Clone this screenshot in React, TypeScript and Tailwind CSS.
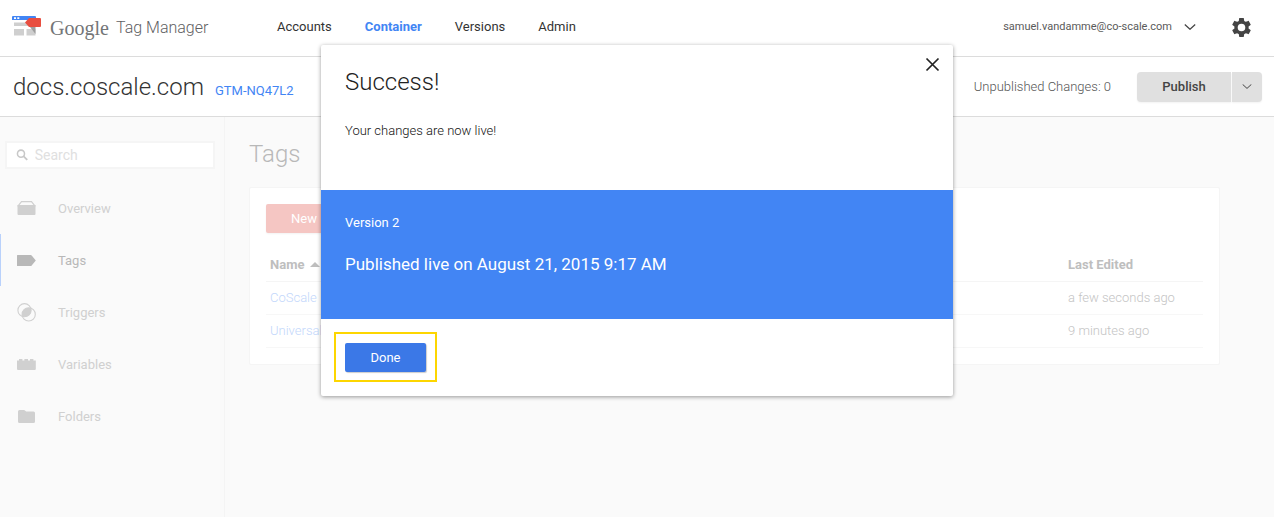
import type { ReactNode } from "react";

const NAV = [
  { label: "Accounts", active: false },
  { label: "Container", active: true },
  { label: "Versions", active: false },
  { label: "Admin", active: false },
];

const ROWS = [
  { name: "CoScale", edited: "a few seconds ago" },
  { name: "Universal Analytics", edited: "9 minutes ago" },
];

const SIDE: { label: string; active?: boolean; icon: ReactNode }[] = [
  {
    label: "Overview",
    icon: (
      <>
        <path d="M4.500 2.600h10l3.200 4H1.300z" fill="#fafafa" stroke="currentColor" strokeWidth="1.200" />
        <path d="M0.500 6h18V15q0 1-1 1h-16q-1 0-1-1z" />
      </>
    ),
  },
  { label: "Tags", active: true, icon: <path d="M0 4.500q0-.500.500-.500h13.200q.600 0 1 .500L18.800 9.500l-4.100 5q-.400.500-1 .500H.500q-.500 0-.500-.500z" /> },
  {
    label: "Triggers",
    icon: (
      <>
        <circle cx="7.500" cy="7.200" r="6.600" fill="none" stroke="currentColor" strokeWidth="1.100" />
        <circle cx="11.700" cy="11.400" r="6.600" fill="none" stroke="currentColor" strokeWidth="1.100" />
        <path d="M13.770 5.130A6.600 6.600 0 0 0 5.430 13.470A6.600 6.600 0 0 0 13.770 5.130z" />
      </>
    ),
  },
  { label: "Variables", icon: <path d="M0 5.500h2V4h3.400v1.500h2V4h3.600v1.500h2V4h3.400v1.500h2.400V14q0 1-1 1H1q-1 0-1-1z" /> },
  { label: "Folders", icon: <path d="M1 4.500q0-1.500 1.500-1.500h4.700l2 1.500H16.500q1.500 0 1.500 1.500V14.500q0 1.500-1.500 1.500H2.500q-1.500 0-1.500-1.500z" /> },
];

function Logo() {
  return (
    <svg width="30" height="20" viewBox="0 0 30 20" aria-hidden="true">
      <path d="M2 6.500h22V10H2zM2 13h10v6.500H2zM14.500 13H23.500v6.500h-9z" fill="#cfcfcf" />
      <path d="M18 11h5.500v7z" fill="#9e9e9e" />
      <path d="M0 1q0-1 1-1h22q1 0 1 1v3H0z" fill="#4285f4" />
      <path d="M2 1.300h2v1.700H2zM5.300 1.300h2v1.700h-2z" fill="#fff" />
      <path d="M17 2h11q1 0 1 1v7q0 1-1 1H17l-4-4.500z" fill="#e84e40" />
    </svg>
  );
}

function Chevron({ size }: { size: "sm" | "lg" }) {
  return (
    <svg className={size === "lg" ? "h-[6px] w-[12px]" : "h-[5px] w-[10px]"} viewBox="0 0 12 6" fill="none" stroke="#444" strokeWidth="1.200" aria-hidden="true">
      <path d="M.8.500l5.200 4.800 5.200-4.800" />
    </svg>
  );
}

function Header() {
  return (
    <header className="flex h-[57px] items-center border-b border-[#dcdcdc] bg-white pr-[23px] pb-px pl-3">
      <a href="#home" className="flex w-[265px] items-start">
        <Logo />
        <span className="ml-2 w-[58px] font-['Liberation_Serif',serif] text-xl leading-6 text-[#737577]">Google</span>
        <span className="ml-2 text-base leading-6 font-light text-[#5f6163]">Tag Manager</span>
      </a>
      <nav className="flex gap-[33px] pb-[2px] text-[13px] leading-5">
        {NAV.map((n) => (
          <a key={n.label} href={"#" + n.label} className={n.active ? "font-bold text-[#4285f4]" : "text-[#333]"}>
            {n.label}
          </a>
        ))}
      </nav>
      <button className="ml-auto flex items-center gap-3 pb-px text-[11px] leading-5 text-[#5a5a5a]">
        samuel.vandamme@co-scale.com
        <Chevron size="lg" />
      </button>
      <button aria-label="Settings" className="ml-9">
        <svg width="19" height="19" viewBox="2 2 20 20" fill="#444" aria-hidden="true">
          <path d="M19.430 12.980c.040-.320.070-.640.070-.980s-.030-.660-.070-.980l2.110-1.650c.190-.150.240-.420.120-.640l-2-3.460c-.120-.220-.390-.300-.610-.220l-2.490 1c-.520-.400-1.080-.730-1.690-.980l-.380-2.650C14.460 2.180 14.250 2 14 2h-4c-.250 0-.460.180-.490.420l-.380 2.650c-.610.250-1.170.590-1.690.980l-2.490-1c-.230-.090-.490 0-.610.220l-2 3.460c-.130.220-.070.490.120.640l2.110 1.650c-.040.320-.070.650-.070.980s.030.660.070.980l-2.110 1.650c-.190.150-.240.420-.120.640l2 3.460c.120.220.390.300.610.220l2.490-1c.520.400 1.080.730 1.690.980l.380 2.650c.030.240.240.420.490.420h4c.250 0 .460-.180.490-.420l.380-2.650c.610-.250 1.170-.590 1.690-.980l2.490 1c.230.090.490 0 .610-.220l2-3.460c.120-.220.070-.490-.120-.640zM12 16a4 4 0 1 1 0-8 4 4 0 0 1 0 8z" />
        </svg>
      </button>
    </header>
  );
}

function ContainerBar() {
  return (
    <div className="flex h-[60px] items-center border-b border-[#dcdcdc] bg-white pr-3 pl-[13px]">
      <div className="flex items-baseline gap-[11px]">
        <h1 className="text-2xl font-light text-[#333]">docs.coscale.com</h1>
        <a href="#container" className="text-[13px] text-[#4285f4]">GTM-NQ47L2</a>
      </div>
      <span className="ml-auto text-[13px] leading-5 font-light text-[#555]">Unpublished Changes: 0</span>
      <div className="ml-[26px] flex gap-px">
        <button className="h-[30px] w-[94px] rounded-l-sm bg-[#e0e0e0] text-[13px] font-medium text-[#444] shadow-xs">Publish</button>
        <button aria-label="More publish options" className="flex h-[30px] w-[30px] items-center justify-center rounded-r-sm bg-[#e0e0e0] shadow-xs">
          <Chevron size="sm" />
        </button>
      </div>
    </div>
  );
}

function Sidebar() {
  return (
    <aside className="w-[225px] shrink-0 border-r border-[#f4f4f4] pt-6">
      <label className="mr-[9px] ml-[5px] flex h-7 items-center gap-[6px] border-2 border-[#f5f5f5] bg-white pl-[9px] text-[#c8c8c8]">
        <svg width="14" height="14" viewBox="0 0 14 14" fill="none" stroke="currentColor" aria-hidden="true">
          <circle cx="5.500" cy="5.500" r="3.900" strokeWidth="1.700" />
          <path d="M8.200 8.200l4.200 4.200" strokeWidth="2" />
        </svg>
        <input type="search" aria-label="Search" placeholder="Search" className="w-full min-w-0 bg-transparent text-sm outline-none placeholder:text-[#e0e0e0]" />
      </label>
      <nav className="mt-[13px] flex flex-col text-[13px]">
        {SIDE.map((s) => (
          <a
            key={s.label}
            href={"#" + s.label}
            className={"flex h-[52px] items-center gap-[21px] border-l pt-px pl-4 " + (s.active ? "border-[#b9d1fb] text-[#b8b8b8]" : "border-transparent text-[#d0d0d0]")}
          >
            <svg className="mb-px" width="20" height="19" viewBox="0 0 20 19" fill="currentColor" aria-hidden="true">{s.icon}</svg>
            {s.label}
          </a>
        ))}
      </nav>
    </aside>
  );
}

function TagsPage() {
  return (
    <main className="min-w-0 flex-1 pt-[21px] pr-[54px] pl-6">
      <h2 className="text-2xl font-light text-[#b8b8b8]">Tags</h2>
      <section className="mt-[17px] rounded-xs border border-[#f5f5f5] bg-white p-4">
        <button className="h-[29px] w-[76px] rounded-xs bg-[#f5c6c3] text-[13px] text-white shadow-xs">New</button>
        <table className="mt-[15px] w-full table-fixed border-collapse text-left text-[13px]">
          <thead>
            <tr className="h-[33px] border-b border-[#f5f5f5] text-[#bebebe]">
              <th className="pl-1 font-bold">
                <span className="flex items-center gap-[6px]">
                  Name
                  <svg width="10" height="5" viewBox="0 0 10 5" fill="currentColor" aria-hidden="true"><path d="M0 5l5-5 5 5z" /></svg>
                </span>
              </th>
              <th className="w-[139px] pl-1 font-bold">Last Edited</th>
            </tr>
          </thead>
          <tbody>
            {ROWS.map((r) => (
              <tr key={r.name} className="h-[33px] border-b border-[#f7f7f7]">
                <td className="pl-1 font-light"><a href="#tag" className="text-[#c3d7fb]">{r.name}</a></td>
                <td className="pl-1 font-light text-[#c4c4c4]">{r.edited}</td>
              </tr>
            ))}
          </tbody>
        </table>
      </section>
    </main>
  );
}

function SuccessDialog() {
  return (
    <div role="dialog" aria-modal="true" aria-labelledby="dialog-title" className="absolute top-[45px] left-1/2 w-[632px] -translate-x-1/2 rounded-xs bg-white shadow-[0_1px_4px_rgba(0,0,0,0.4)]">
      <button aria-label="Close" className="absolute top-3 right-[13px]">
        <svg width="15" height="15" viewBox="0 0 15 15" stroke="#222" strokeWidth="1.700" aria-hidden="true"><path d="M1.500 1.500l12 12M13.500 1.500l-12 12" /></svg>
      </button>
      <div className="h-[145px] px-6 pt-[21px]">
        <h2 id="dialog-title" className="text-2xl font-light text-[#222]">Success!</h2>
        <p className="mt-[23px] text-[13px] leading-5 font-light text-[#111]">Your changes are now live!</p>
      </div>
      <div className="h-[129px] bg-[#4285f4] px-6 pt-[23px] text-white">
        <p className="text-[13px] leading-5">Version 2</p>
        <p className="mt-[19px] text-[17px] leading-6">Published live on August 21, 2015 9:17 AM</p>
      </div>
      <div className="flex px-[13px] pt-[13px] pb-[14px]">
        <div className="border-2 border-[#fdd600] px-[9px] pt-[9px] pb-2">
          <button className="block h-[29px] w-[81px] rounded-xs bg-[#3b78e7] text-[13px] text-white shadow-[1px_1px_1px_rgba(0,0,0,0.2)]">Done</button>
        </div>
      </div>
    </div>
  );
}

export default function App() {
  return (
    <div className="relative flex min-h-screen flex-col bg-[#fafafa] font-[Roboto,sans-serif]">
      <Header />
      <ContainerBar />
      <div className="flex flex-1">
        <Sidebar />
        <TagsPage />
      </div>
      <SuccessDialog />
    </div>
  );
}
